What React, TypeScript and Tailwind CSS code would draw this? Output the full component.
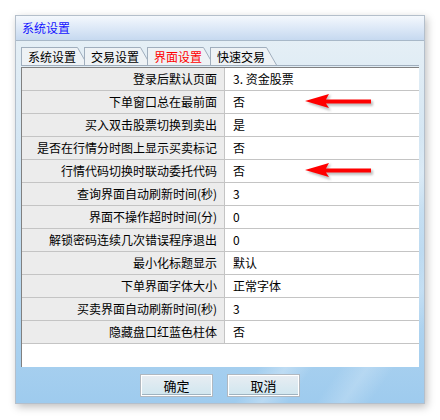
import React from 'react';

const FONT = '"SimSun", "Noto Sans CJK SC", "Liberation Sans", sans-serif';

const TABS = [
  { label: '系统设置', active: false },
  { label: '交易设置', active: false },
  { label: '界面设置', active: true },
  { label: '快速交易', active: false },
];

const ROWS: { name: string; value: string; arrow?: boolean }[] = [
  { name: '登录后默认页面', value: '3. 资金股票' },
  { name: '下单窗口总在最前面', value: '否', arrow: true },
  { name: '买入双击股票切换到卖出', value: '是' },
  { name: '是否在行情分时图上显示买卖标记', value: '否' },
  { name: '行情代码切换时联动委托代码', value: '否', arrow: true },
  { name: '查询界面自动刷新时间(秒)', value: '3' },
  { name: '界面不操作超时时间(分)', value: '0' },
  { name: '解锁密码连续几次错误程序退出', value: '0' },
  { name: '最小化标题显示', value: '默认' },
  { name: '下单界面字体大小', value: '正常字体' },
  { name: '买卖界面自动刷新时间(秒)', value: '3' },
  { name: '隐藏盘口红蓝色柱体', value: '否' },
];

function RedArrow() {
  return (
    <svg width="76" height="22" viewBox="0 0 76 22" className="ml-[58px] shrink-0">
      <defs>
        <filter id="sh" x="-20%" y="-50%" width="140%" height="200%">
          <feGaussianBlur stdDeviation="1.2" />
        </filter>
      </defs>
      <path d="M4 12 L28 4 L25 10 L70 10 L70 15 L25 15 L28 20 Z" fill="#9a9a9a" opacity="0.6" filter="url(#sh)" />
      <path d="M2 10 L26 3 L23 8.5 L68 8.5 L68 12.5 L23 12.5 L26 17 Z" fill="#ff0000" />
    </svg>
  );
}

function Tab({ label, active, first }: { label: string; active: boolean; first: boolean }) {
  return (
    <div className={`flex items-stretch h-[18px] ${first ? '' : '-ml-[4px]'}`}>
      <div
        className={`flex items-center pl-[6px] pr-[1px] border-l border-t border-[#a0aebd] bg-[#eef2f5] text-[12px] leading-none ${
          active ? 'text-[#ff0000]' : 'text-black'
        }`}
      >
        {label}
      </div>
      <svg width="11" height="18" viewBox="0 0 11 18" className="shrink-0">
        <path d="M0 0.5 L0.5 0.5 L10.5 18 L0 18 Z" fill="#eef2f5" />
        <path d="M0 0.5 L0.5 0.5 L10.5 18" fill="none" stroke="#a0aebd" strokeWidth="1" />
      </svg>
    </div>
  );
}

export default function App() {
  return (
    <div className="w-[440px] h-[420px] bg-white pl-[15px] pt-[15px]" style={{ fontFamily: FONT }}>
      <div className="w-[410px] h-[389px] flex flex-col border border-[#b4bfcb] shadow-[2px_3px_8px_rgba(0,0,0,0.25)] bg-[linear-gradient(125deg,transparent_72%,rgba(255,255,255,0.28)_76%,transparent_80%,transparent_84%,rgba(255,255,255,0.2)_88%,transparent_92%),linear-gradient(to_bottom,#e9f1f6,#d2e5f3_35%,#9ecbee)]">
        {/* Title bar */}
        <div className="h-[25px] flex items-center pl-[6px] border-b border-[#a8b8c8] bg-gradient-to-b from-[#f4f8fd] to-[#c6d9f0] text-[#1414ff] text-[12px]">
          系统设置
        </div>

        <div className="flex-1 flex flex-col px-[5px] pt-[6px]">
          {/* Tabs */}
          <div className="flex items-end border-b border-[#a0aebd]">
            {TABS.map((t, i) => (
              <Tab key={t.label} label={t.label} active={t.active} first={i === 0} />
            ))}
          </div>

          {/* Settings table */}
          <div className="mt-[1px] h-[300px] w-[398px] bg-white border-l border-t border-[#808080] flex flex-col text-[12px] text-black">
            {ROWS.map((r) => (
              <div key={r.name} className="flex h-[23px] border-b border-[#c4c4c4]">
                <div className="w-[203px] shrink-0 bg-[#ececec] border-r border-[#c4c4c4] flex items-center justify-end pr-[7px]">
                  {r.name}
                </div>
                <div className="flex-1 flex items-center pl-[8px]">
                  <span>{r.value}</span>
                  {r.arrow && <RedArrow />}
                </div>
              </div>
            ))}
          </div>

          {/* Buttons */}
          <div className="flex justify-center gap-[14px] mt-[7px]">
            {['确定', '取消'].map((b) => (
              <button
                key={b}
                className="w-[73px] h-[23px] text-[13px] text-black border border-[#b0b8c0] shadow-[inset_0_0_0_1px_#ffffff,inset_0_-2px_0_#9fb3c0] bg-gradient-to-b from-[#e8edf2] to-[#cfe6ef] flex items-center justify-center"
              >
                {b}
              </button>
            ))}
          </div>
        </div>
      </div>
    </div>
  );
}
